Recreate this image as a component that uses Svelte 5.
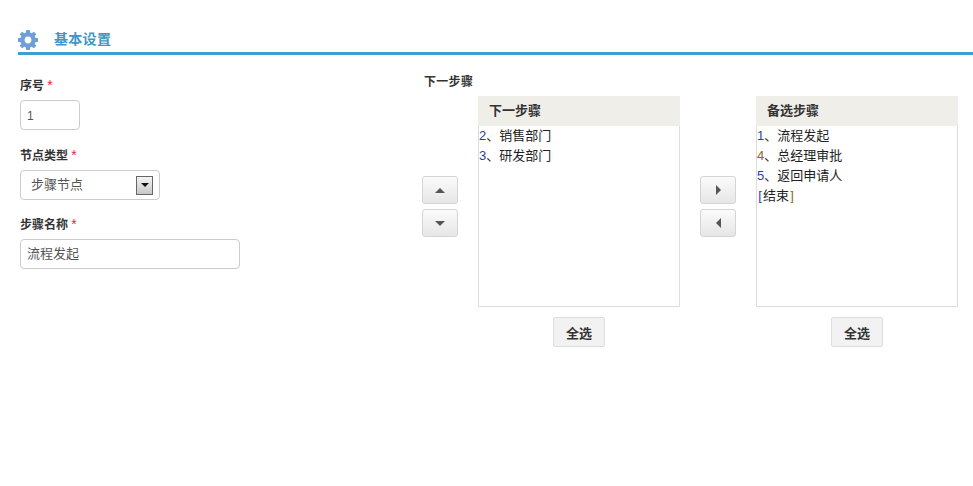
<script lang="ts">
	const nextSteps = [
		{ no: '2', name: '销售部门', tone: 'blue' },
		{ no: '3', name: '研发部门', tone: 'blue' }
	];
	const candidates = [
		{ no: '1', name: '流程发起', tone: 'blue' },
		{ no: '4', name: '总经理审批', tone: 'brown' },
		{ no: '5', name: '返回申请人', tone: 'blue' }
	];
	const teeth = [0, 45, 90, 135, 180, 225, 270, 315];
</script>

<div class="page">
	<header class="section-title">
		<svg class="gear" viewBox="0 0 20 20" width="20" height="20" aria-hidden="true">
			<circle cx="10" cy="10" r="5.6" fill="none" stroke="#6f9fd8" stroke-width="4.4" />
			{#each teeth as angle}
				<rect x="8" y="0" width="4" height="4" rx="0.6" fill="#6f9fd8" transform="rotate({angle} 10 10)" />
			{/each}
		</svg>
		<h2>基本设置</h2>
	</header>

	<div class="content">
		<form class="fields">
			<div class="field seq">
				<span class="label">序号 <i>*</i></span>
				<div class="input short">1</div>
			</div>
			<div class="field type">
				<span class="label">节点类型 <i>*</i></span>
				<div class="input select">
					<span class="select-text">步骤节点</span>
					<span class="arrow-box"><span class="arrow-down"></span></span>
				</div>
			</div>
			<div class="field name">
				<span class="label">步骤名称 <i>*</i></span>
				<div class="input wide">流程发起</div>
			</div>
		</form>

		<section class="steps">
			<div class="steps-label">下一步骤</div>
			<div class="transfer">
				<div class="move-buttons first">
					<button type="button" aria-label="上移"><span class="tri up"></span></button>
					<button type="button" aria-label="下移"><span class="tri down"></span></button>
				</div>
				<div class="column">
					<div class="panel">
						<div class="panel-head">下一步骤</div>
						<ul>
							{#each nextSteps as s}
								<li><span class={s.tone}>{s.no}</span>、{s.name}</li>
							{/each}
						</ul>
					</div>
					<button type="button" class="select-all">全选</button>
				</div>
				<div class="move-buttons second">
					<button type="button" aria-label="右移"><span class="tri right"></span></button>
					<button type="button" aria-label="左移"><span class="tri left"></span></button>
				</div>
				<div class="column">
					<div class="panel">
						<div class="panel-head">备选步骤</div>
						<ul>
							{#each candidates as s}
								<li><span class={s.tone}>{s.no}</span>、{s.name}</li>
							{/each}
							<li><span class="bracket blue">[</span>结束<span class="bracket brown">]</span></li>
						</ul>
					</div>
					<button type="button" class="select-all">全选</button>
				</div>
			</div>
		</section>
	</div>
</div>

<style>
	:global(body) {
		background: #fff;
		font-family: 'Liberation Sans', 'Noto Sans CJK SC', sans-serif;
		color: #333;
	}

	.page {
		width: 973px;
		height: 486px;
		overflow: hidden;
		padding-top: 30px;
		box-sizing: border-box;
	}

	.section-title {
		display: flex;
		align-items: center;
		gap: 16px;
		height: 20px;
		margin-left: 18px;
		padding-bottom: 2px;
		border-bottom: 3px solid #3a9fd5;
	}

	.gear {
		flex-shrink: 0;
	}

	h2 {
		margin: -2px 0 0;
		font-size: 14px;
		font-weight: bold;
		line-height: 20px;
		letter-spacing: 0.3px;
		color: #3f97c6;
	}

	.content {
		display: flex;
		padding-top: 19px;
	}

	.fields {
		width: 422px;
		padding-left: 20px;
		box-sizing: border-box;
		padding-top: 4px;
	}

	.field {
		display: flex;
		flex-direction: column;
		align-items: flex-start;
		margin-bottom: 17px;
	}

	.field.seq {
		margin-bottom: 18px;
	}

	.label {
		height: 15px;
		line-height: 15px;
		font-size: 12px;
		font-weight: bold;
		color: #333;
		margin-bottom: 7px;
	}

	.label i {
		font-style: normal;
		font-weight: normal;
		font-size: 14px;
		color: #ee1c3c;
	}

	.input {
		height: 30px;
		box-sizing: border-box;
		border: 1px solid #ccc;
		border-radius: 4px;
		display: flex;
		align-items: center;
		padding-left: 6px;
		font-size: 13px;
		color: #555;
	}

	.short {
		width: 60px;
		padding-top: 2px;
		font-size: 12px;
	}

	.select {
		width: 140px;
		justify-content: space-between;
		padding: 0 6px 0 10px;
	}

	.select-text {
		margin-bottom: 4px;
	}

	.wide {
		width: 220px;
		padding-bottom: 3px;
	}

	.arrow-box {
		width: 17px;
		height: 19px;
		box-sizing: border-box;
		border: 1px solid #666;
		background: linear-gradient(#f4f4f4, #c8c8c8);
		display: flex;
		align-items: center;
		justify-content: center;
	}

	.arrow-down {
		width: 0;
		height: 0;
		border-left: 4px solid transparent;
		border-right: 4px solid transparent;
		border-top: 4px solid #111;
	}

	.steps {
		flex: 1;
	}

	.steps-label {
		height: 15px;
		line-height: 15px;
		margin-top: 1px;
		margin-left: 2px;
		font-size: 12px;
		font-weight: bold;
		letter-spacing: 0.3px;
	}

	.transfer {
		display: flex;
		align-items: flex-start;
		margin-top: 6px;
	}

	.move-buttons {
		display: flex;
		flex-direction: column;
		gap: 5px;
		width: 36px;
		padding-top: 80px;
	}

	.move-buttons.first {
		margin-right: 20px;
	}

	.move-buttons.second {
		margin: 0 20px;
	}

	.move-buttons button {
		width: 36px;
		height: 28px;
		padding: 0;
		border: 1px solid #d5d5d5;
		border-radius: 3px;
		background: linear-gradient(#fbfbfb, #e6e6e6);
		display: flex;
		align-items: center;
		justify-content: center;
	}

	.tri {
		width: 0;
		height: 0;
	}

	.tri.up {
		border-left: 5px solid transparent;
		border-right: 5px solid transparent;
		border-bottom: 5px solid #555;
	}

	.tri.down {
		border-left: 5px solid transparent;
		border-right: 5px solid transparent;
		border-top: 5px solid #555;
	}

	.tri.right {
		border-top: 5px solid transparent;
		border-bottom: 5px solid transparent;
		border-left: 5px solid #555;
	}

	.tri.left {
		border-top: 5px solid transparent;
		border-bottom: 5px solid transparent;
		border-right: 5px solid #555;
	}

	.column {
		width: 202px;
		display: flex;
		flex-direction: column;
		align-items: center;
	}

	.panel {
		width: 100%;
		height: 211px;
		box-sizing: border-box;
		border: 1px solid #ddd;
		border-top: none;
	}

	.panel-head {
		height: 30px;
		margin: 0 -1px;
		padding-left: 11px;
		line-height: 30px;
		background: #efeee8;
		font-size: 13px;
		font-weight: bold;
		color: #333;
	}

	ul {
		list-style: none;
		margin: 0;
		padding: 0;
	}

	li {
		height: 20px;
		line-height: 19px;
		font-size: 13px;
		color: #222;
		white-space: nowrap;
	}

	.bracket {
		display: inline-block;
		width: 6px;
		text-align: center;
	}

	.blue {
		color: #2b3f9c;
	}

	.brown {
		color: #8a6a20;
	}

	.select-all {
		width: 52px;
		height: 30px;
		margin-top: 10px;
		padding: 0;
		border: 1px solid #ddd;
		border-radius: 2px;
		background: #f2f2f2;
		font-family: inherit;
		font-size: 13px;
		font-weight: bold;
		color: #333;
	}
</style>
